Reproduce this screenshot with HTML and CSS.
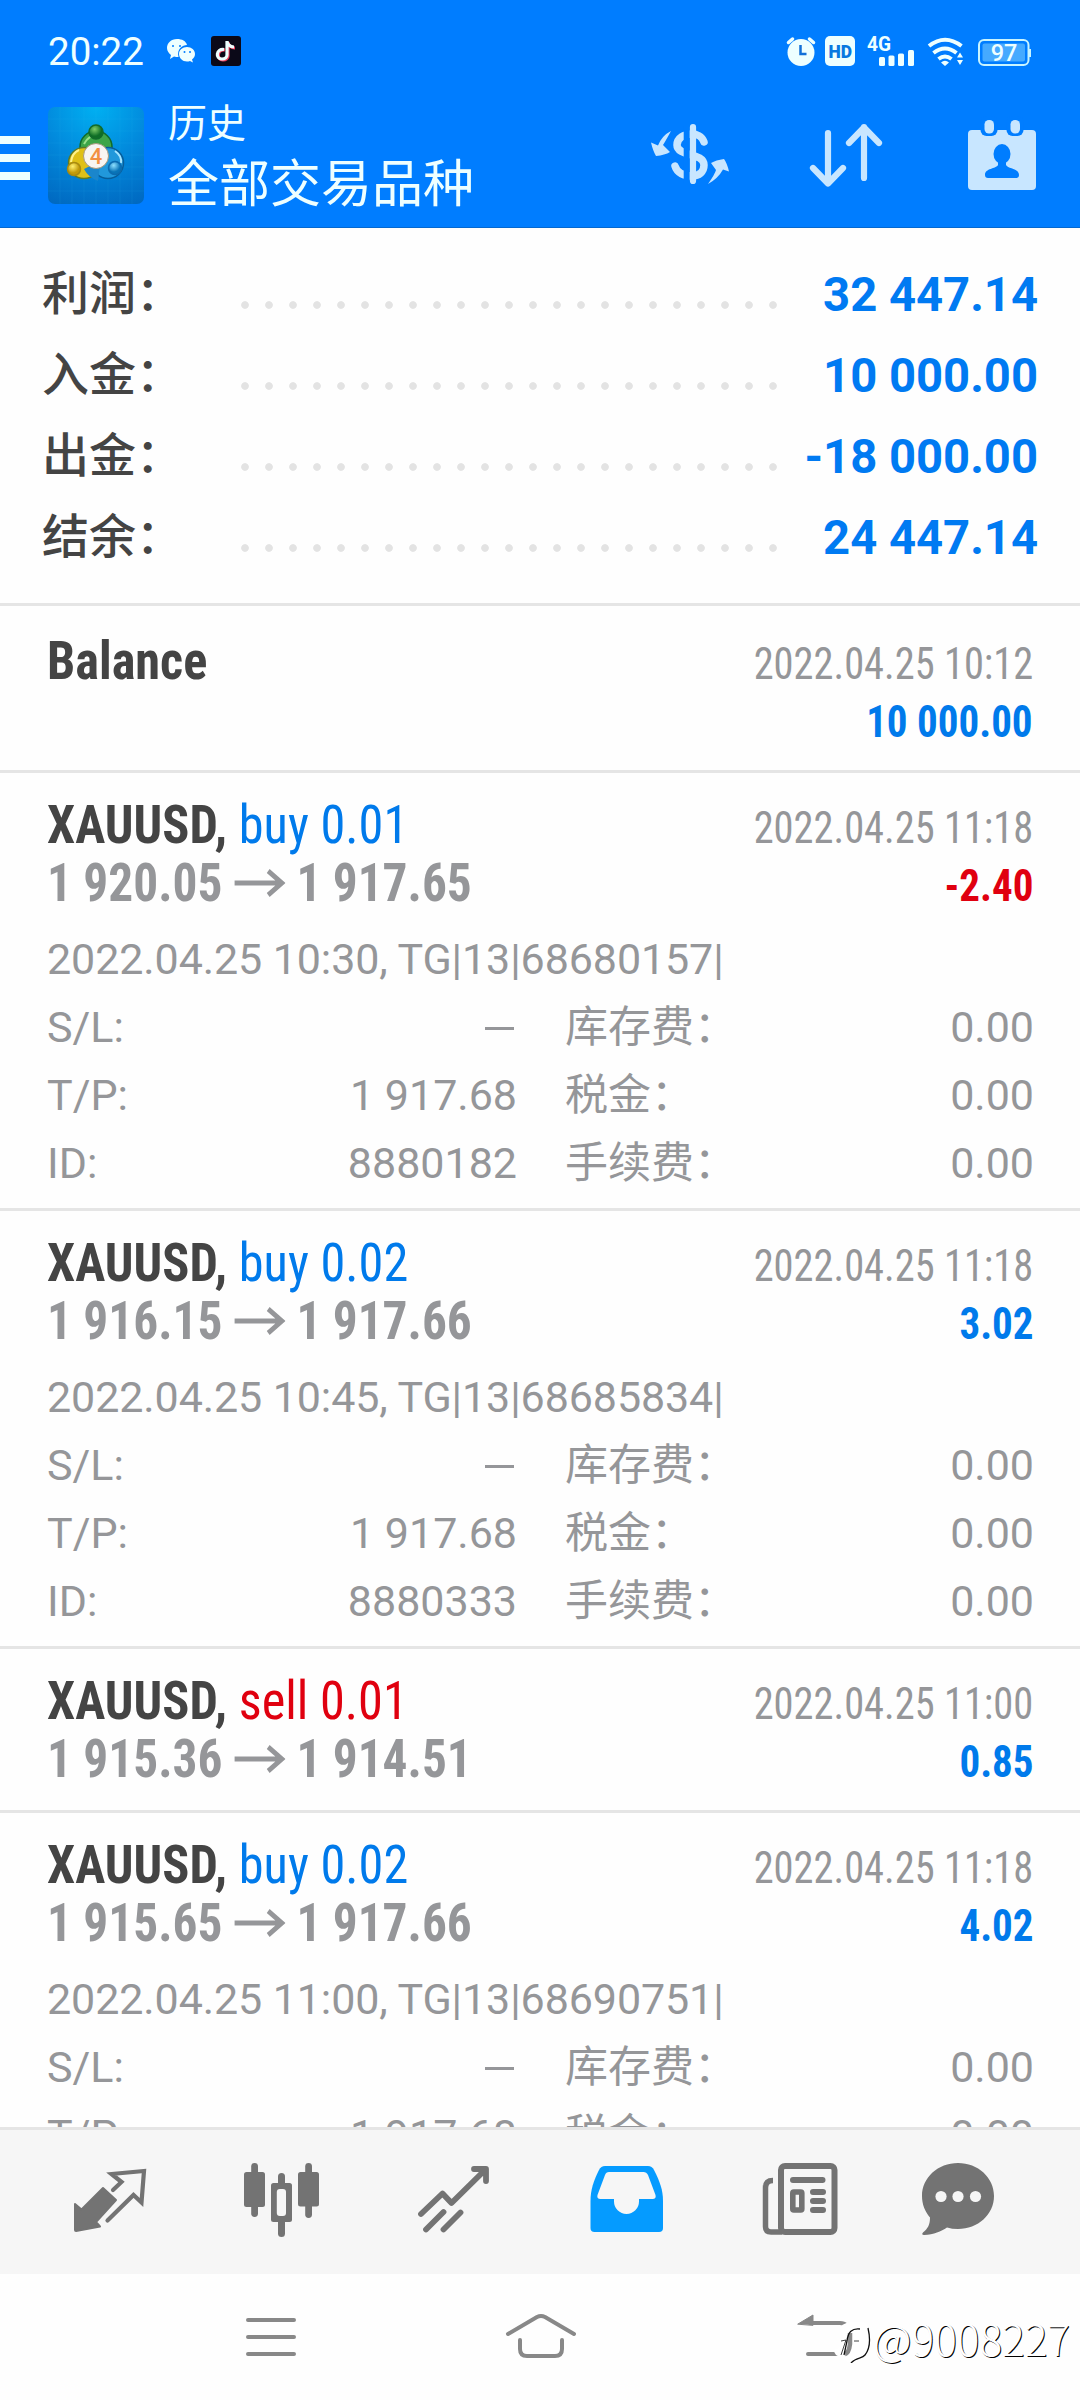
FILE: index.html
```html
<!DOCTYPE html>
<html lang="zh-CN">
<head>
<meta charset="utf-8">
<title>历史</title>
<link rel="stylesheet" href="styles.css">
</head>
<body>
<div class="screen">
  <header class="header">
    <div class="status">
      <span class="clock">20:22</span>
      <svg class="wechat" width="28" height="24" viewBox="167 39 28 24"><path fill="#eff" d="M177 39c-6 0-10 4-10 9 0 3 2 5.500 4 7l-1 4 4-2.500c1.500.5 3 .5 4.500.5-2-8 4-12 8.500-12-1-4-5-6-10-6z"/><path fill="#eff" d="M187 47c-4.500 0-8 3-8 7s3.500 7.500 8 7.500c1 0 2 0 3-.5l3 1.500-1-3c2-1.500 3-3.500 3-5.500 0-4-3.500-7-8-7z"/><g fill="#007dff"><circle cx="173" cy="46" r="1"/><circle cx="180" cy="46" r="1"/><circle cx="184.500" cy="52" r="1"/><circle cx="190" cy="52" r="1"/></g></svg>
      <svg class="tiktok" width="30" height="30" viewBox="0 0 30 30"><rect width="30" height="30" rx="3" fill="#0b0918"/><g fill="none" stroke-width="3.200"><path stroke="#f04060" d="M14 14c-8-1-9 10-2 10 3 0 5-2 5-4V6c0 3 3 6 7 6"/><path stroke="#eff" d="M13 13.500c-8-1-9 9.500-2 9.500 3 0 5-2 5-4V5c0 3 3 6 7 6"/></g></svg>
      <svg class="status-icons" width="244" height="32" viewBox="784 35 244 32">
        <g fill="none" stroke="#eff" stroke-width="3.500" stroke-linecap="round"><path d="M788.500 42.500l4-3.500M813.500 42.500l-4-3.500"/></g>
        <circle cx="801" cy="52.500" r="13.500" fill="#eff"/><path d="M800.500 45v9h6" fill="none" stroke="#1270d8" stroke-width="2.500"/>
        <rect x="825" y="36" width="30" height="30" rx="5" fill="#eff"/>
        <text x="828.500" y="58" font-size="19" font-weight="900" fill="#0878e0" textLength="23.500" lengthAdjust="spacingAndGlyphs">HD</text>
        <text x="867" y="51" font-size="20" font-weight="700" fill="#eff" textLength="24" lengthAdjust="spacingAndGlyphs">4G</text>
        <g fill="#eff"><rect x="879" y="57" width="6" height="9" rx="1.500"/><rect x="888.500" y="55.500" width="6" height="10.500" rx="1.500"/><rect x="898" y="53.500" width="6" height="12.500" rx="1.500"/><rect x="908" y="50" width="6" height="16" rx="1.500"/></g>
        <g fill="none" stroke="#eff" stroke-width="4"><path d="M929 46q16-12.500 32.500 0M933.500 53q11.500-9 23 0M938.500 59q6.500-5 13 0"/></g><path fill="#eff" d="M941 62.500q4-3.500 8 0l-4 3.500zM957 57.500l3-5 3 5zM957 60l3 5 3-5z"/>
        <rect x="979" y="40" width="49.500" height="25" rx="5" fill="none" stroke="#c8f4ff" stroke-width="2"/><rect x="982.500" y="43.500" width="42.500" height="18" rx="2" fill="#45aaff"/>
        <text x="1004" y="60.500" text-anchor="middle" font-size="23.500" font-weight="500" fill="#eff">97</text>
      </svg>
      <i class="battery-tip"></i>
    </div>
    <div class="toolbar">
      <div class="menu"><i></i><i></i><i></i></div>
      <svg class="logo" width="96" height="97" viewBox="48 107 96 97">
        <defs>
          <radialGradient id="bg" cx=".5" cy="0" r="1.100"><stop offset="0" stop-color="#00b0f2"/><stop offset=".5" stop-color="#0289dc"/><stop offset="1" stop-color="#0068c0"/></radialGradient>
          <radialGradient id="gr" cx=".4" cy=".3"><stop offset="0" stop-color="#7fcc68"/><stop offset="1" stop-color="#0f6e26"/></radialGradient>
          <radialGradient id="ye" cx=".4" cy=".3"><stop offset="0" stop-color="#fff070"/><stop offset="1" stop-color="#c29a08"/></radialGradient>
          <radialGradient id="bl" cx=".4" cy=".3"><stop offset="0" stop-color="#8fe0ff"/><stop offset="1" stop-color="#0874b8"/></radialGradient>
        </defs>
        <rect x="48" y="107" width="96" height="97" rx="7" fill="url(#bg)"/>
        <path d="M60 107v97M72 107v97M84 107v97M96 107v97M108 107v97M120 107v97M132 107v97M48 119h96M48 131h96M48 143h96M48 155h96M48 167h96M48 179h96M48 191h96" stroke="#3bc0f4" stroke-width=".7" opacity=".14"/>
        <g stroke-width="1.500">
          <circle cx="96" cy="147" r="16" fill="#3da548" stroke="#126b2b"/>
          <path d="M84 144q5-10 15-9" fill="none" stroke="#9be08c" stroke-width="2"/>
          <circle cx="108" cy="163" r="15.500" fill="#2198db" stroke="#075d99"/>
          <path d="M115 151q7 5 6 12" fill="none" stroke="#a5e4ff" stroke-width="2"/>
          <circle cx="84" cy="163" r="15.500" fill="#dfc018" stroke="#5c7a26"/>
          <path d="M71 162q1-9 8-12" fill="none" stroke="#fff28a" stroke-width="2"/>
          <path d="M92 165l8 0-2 16q-10-4-14-12z" fill="#1a86cc" stroke="none"/>
          <circle cx="96" cy="132" r="7" fill="url(#gr)" stroke="#126b2b"/>
          <circle cx="74" cy="169" r="6.500" fill="url(#ye)" stroke="#a88a10"/>
          <circle cx="115" cy="168" r="6.500" fill="url(#bl)" stroke="#0b6bb0"/>
        </g>
        <circle cx="96" cy="156" r="12.500" fill="#f8f5f2" stroke="#a8987c" stroke-width="1"/>
        <text x="96" y="164" text-anchor="middle" font-size="22" font-weight="500" fill="#f29043">4</text>
      </svg>
      <div class="titles"><div class="t1">历史</div><div class="t2">全部交易品种</div></div>
      <svg class="actions" width="390" height="76" viewBox="648 116 390 76">
        <g fill="#c8e6ff">
          <path d="M671 131q-6 11-8 14l7 7q-5 3-14 4-3-5-5-13.500l7 3q4-10 13-14.500z"/>
          <path d="M708 184q7-10 8-14l-5-7q5-3 13-4 3 4 5 12.500l-6-2q-5 9-15 14.500z"/>
        </g>
        <path d="M704 142c-2-6-8-8-12-8-8 0-15 4-15 11 0 12 27 7 27 20 0 7-5 11-12 11-8 0-15-3-17-10" fill="none" stroke="#c8e6ff" stroke-width="7.500" stroke-linecap="round"/>
        <path fill="#007dff" d="M683.700 126h6v58h-6z"/>
        <g fill="none" stroke="#c8e6ff" stroke-width="6.200" stroke-linecap="round" stroke-linejoin="round">
          <path d="M693 127v54M828 133v50M813 168l15 15.500 15-15.500M864 178v-51M849 143l15-15.500 15 15.500"/>
        </g>
        <rect x="968" y="130" width="68" height="60" rx="4" fill="#c8e6ff"/>
        <g fill="#007dff"><rect x="980.500" y="116" width="17" height="20" rx="6"/><rect x="1006.500" y="116" width="17" height="20" rx="6"/><ellipse cx="1002" cy="154" rx="8.500" ry="10"/><path d="M998 160h8v5c2 4 13 3 13 10 0 2-1 3-3 3h-28c-2 0-3-1-3-3 0-7 11-6 13-10z"/></g>
        <g fill="#c8e6ff"><rect x="984.500" y="120" width="9.500" height="13.500" rx="4.500"/><rect x="1010.500" y="120" width="9.500" height="13.500" rx="4.500"/></g>
      </svg>
    </div>
  </header>

  <section class="summary">
    <div class="srow"><span class="slabel">利润：</span><i class="dots"></i><b>32 447.14</b></div>
    <div class="srow"><span class="slabel">入金：</span><i class="dots"></i><b>10 000.00</b></div>
    <div class="srow"><span class="slabel">出金：</span><i class="dots"></i><b>-18 000.00</b></div>
    <div class="srow"><span class="slabel">结余：</span><i class="dots"></i><b>24 447.14</b></div>
  </section>

  <main class="list">
    <article class="item first">
      <div class="line"><span class="name">Balance</span><span class="date">2022.04.25 10:12</span></div>
      <div class="line"><span></span><span class="profit">10 000.00</span></div>
    </article>
    <article class="item">
      <div class="line"><span class="name">XAUUSD, <span class="buy">buy 0.01</span></span><span class="date">2022.04.25 11:18</span></div>
      <div class="line"><span class="price"><span>1 920.05</span><svg width="56" height="28" viewBox="0 0 56 28"><path d="M0 14h52M37 2l15 12-15 12"/></svg><span>1 917.65</span></span><span class="profit loss">-2.40</span></div>
      <div class="details">
        <div class="comment">2022.04.25 10:30, TG|13|68680157|</div>
        <div class="drow"><span>S/L:</span><span class="v dash"><i></i></span><span class="k2">库存费：</span><span class="v">0.00</span></div>
        <div class="drow"><span>T/P:</span><span class="v">1 917.68</span><span class="k2">税金：</span><span class="v">0.00</span></div>
        <div class="drow"><span>ID:</span><span class="v">8880182</span><span class="k2">手续费：</span><span class="v">0.00</span></div>
      </div>
    </article>
    <article class="item">
      <div class="line"><span class="name">XAUUSD, <span class="buy">buy 0.02</span></span><span class="date">2022.04.25 11:18</span></div>
      <div class="line"><span class="price"><span>1 916.15</span><svg width="56" height="28" viewBox="0 0 56 28"><path d="M0 14h52M37 2l15 12-15 12"/></svg><span>1 917.66</span></span><span class="profit">3.02</span></div>
      <div class="details">
        <div class="comment">2022.04.25 10:45, TG|13|68685834|</div>
        <div class="drow"><span>S/L:</span><span class="v dash"><i></i></span><span class="k2">库存费：</span><span class="v">0.00</span></div>
        <div class="drow"><span>T/P:</span><span class="v">1 917.68</span><span class="k2">税金：</span><span class="v">0.00</span></div>
        <div class="drow"><span>ID:</span><span class="v">8880333</span><span class="k2">手续费：</span><span class="v">0.00</span></div>
      </div>
    </article>
    <article class="item">
      <div class="line"><span class="name">XAUUSD, <span class="sell">sell 0.01</span></span><span class="date">2022.04.25 11:00</span></div>
      <div class="line"><span class="price"><span>1 915.36</span><svg width="56" height="28" viewBox="0 0 56 28"><path d="M0 14h52M37 2l15 12-15 12"/></svg><span>1 914.51</span></span><span class="profit">0.85</span></div>
    </article>
    <article class="item">
      <div class="line"><span class="name">XAUUSD, <span class="buy">buy 0.02</span></span><span class="date">2022.04.25 11:18</span></div>
      <div class="line"><span class="price"><span>1 915.65</span><svg width="56" height="28" viewBox="0 0 56 28"><path d="M0 14h52M37 2l15 12-15 12"/></svg><span>1 917.66</span></span><span class="profit">4.02</span></div>
      <div class="details">
        <div class="comment">2022.04.25 11:00, TG|13|68690751|</div>
        <div class="drow"><span>S/L:</span><span class="v dash"><i></i></span><span class="k2">库存费：</span><span class="v">0.00</span></div>
        <div class="drow"><span>T/P:</span><span class="v">1 917.68</span><span class="k2">税金：</span><span class="v">0.00</span></div>
      </div>
    </article>
  </main>

  <nav class="tabs">
    <svg viewBox="24 2130 172 144"><path fill="#737373" stroke="#737373" stroke-width="2" stroke-linejoin="round" d="M103 2188l13 12-20 22 4 4.500-24 4.500q-1 0-1-1v-26l6.500 5.500z"/><path fill="none" stroke="#737373" stroke-width="4.200" d="M113 2190l8.500-8-10-8 32.500-3-2.500 31.500-8-7.500-26 25.500" stroke-linecap="round"/></svg>
    <svg viewBox="196 2130 172 144"><g fill="#737373"><rect x="244" y="2172" width="21" height="35" rx="2.500"/><rect x="251.200" y="2163" width="6.800" height="54" rx="3.400"/><rect x="298" y="2172" width="21" height="34.500" rx="2.500"/><rect x="305.200" y="2163" width="6.800" height="55" rx="3.400"/><rect x="271" y="2183" width="21" height="39" rx="2.500"/><rect x="278" y="2173" width="7" height="64" rx="3.500"/></g><rect x="276.800" y="2189" width="9.200" height="27" rx="3" fill="#f6f6f6"/></svg>
    <svg viewBox="368 2130 172 144"><g fill="none" stroke="#737373" stroke-width="5.800" stroke-linecap="round" stroke-linejoin="round"><path d="M421 2214l21.500-20.500 9 9.500 34-33.500M474 2169h12v12M426 2229.500l17.500-17.500M443.500 2229.500l17-17"/></g></svg>
    <svg viewBox="540 2130 172 144"><path fill="#059bff" d="M605 2166h43q4 0 6 4c6 12 9 20 9 31v27q0 4-4 4h-64.500q-4 0-4-4v-27c0-11 3-20 8.500-31q2-4 6-4z"/><path fill="#f6f6f6" d="M609 2172h34.500q3 0 4.500 3l7.500 20q1 4-3 4H639v2.500a12.500 12.500 0 0 1-25 0V2199h-13.500q-4 0-3-4l7.500-20q1-3 4-3z"/></svg>
    <svg viewBox="712 2130 172 144"><g fill="none" stroke="#737373"><rect x="781" y="2166" width="53.500" height="66" rx="4" stroke-width="6"/><path d="M773 2180.500q-7.500 0-7.500 7v39q0 5.500 5.500 5.500h11" stroke-width="5.500"/><rect x="792.800" y="2192" width="9" height="18" rx="1" stroke-width="5.600"/><path d="M793 2180h29.500M813 2192h10M813 2201h10M813 2210h10" stroke-width="6" stroke-linecap="round"/></g></svg>
    <svg viewBox="884 2130 172 144"><path fill="#737373" d="M958 2163c20 0 36 14.500 36 33s-16 33-36 33q-6 0-11-1.500c-6 4-13 7-23 7.500q-3-.5-1-2.500c5-4 7-8 7-15-5-6-8-13-8-21.500 0-18.500 16-33 36-33z"/><g fill="#f6f6f6"><circle cx="941" cy="2196.500" r="5.600"/><circle cx="958" cy="2196.500" r="5.600"/><circle cx="975.500" cy="2196.500" r="5.600"/></g></svg>
  </nav>
  <footer class="sysnav">
    <svg viewBox="135 2274 270 126"><path d="M248 2320h46M248 2337h46M248 2354h46"/></svg>
    <svg viewBox="405 2274 270 126"><path d="M508 2334l29-17q4-2 8 0l29 17M520 2340v9q0 7 7 7h28q7 0 7-7v-9"/></svg>
    <svg viewBox="675 2274 270 126"><path d="M808 2354h32q8 0 8-8v-14q0-9-8-9h-30"/><path class="solid" d="M798 2324l15-9v10z"/></svg>
    <div class="mark">
      <svg width="38" height="44" viewBox="830 2319 38 44"><path fill="#fff" d="M837 2327q5-6 22-5 9 1 9 18-1 18-14 20l-7 3-14-8-3-5q8-1 10-14z"/><path fill="none" stroke="#888" stroke-width="4.500" d="M847 2333v11q-1 9-5 10"/><g fill="none" stroke="#111" stroke-width="1.300"><path d="M857 2329c-8-1-12 3-13 12l-3 14M865 2328c3 13 1 22-3 27-3 4-9 2-14 8"/><path stroke-width=".8" d="M838 2341l5-1-5 15M851 2341h5"/></g></svg>
      <span>@9008227</span>
    </div>
  </footer>
</div>
</body>
</html>
```
FILE: styles.css
```css
* { box-sizing: border-box; }
body { margin: 0; background: #fff; font-family: Roboto, "Noto Sans CJK SC", sans-serif; }
i { display: block; }
svg { display: block; flex: none; }
.screen { width: 1080px; height: 2400px; display: flex; flex-direction: column; overflow: hidden; background: #fefefe; }

.header { height: 228px; flex: none; background: #007dff; color: #eff; border-bottom: 1px solid #0468d0; }
.status { height: 100px; display: flex; align-items: flex-start; padding: 35px 49px 0 48px; }
.clock { width: 119px; font-size: 38.500px; line-height: 34px; }
.wechat { margin: 4px 16px 0 0; }
.tiktok { margin-top: 1px; }
.status-icons { margin-left: auto; overflow: visible; }
.battery-tip { width: 2px; height: 8px; margin: 14px 0 0 1px; background: #c8f4ff; }
.toolbar { display: flex; align-items: flex-start; height: 127px; }
.menu { width: 48px; flex: none; padding-top: 36px; }
.menu i { width: 30px; height: 8px; margin-bottom: 10px; background: #eff; }
.logo { margin-top: 7px; }
.titles { margin-left: 24px; white-space: nowrap; font-family: "Noto Sans CJK SC", sans-serif; font-weight: 400; }
.t1 { font-size: 39px; line-height: 40px; }
.t2 { font-size: 51px; line-height: 60px; margin-top: 10px; }
.actions { margin: 16px 42px 0 auto; }

.summary { height: 378px; flex: none; padding-top: 24px; border-bottom: 3px solid #e5e5e5; }
.srow { height: 81px; display: flex; align-items: flex-start; padding: 0 42px; }
.slabel { width: 191px; font: 500 47px/76px "Noto Sans CJK SC", sans-serif; color: #444; white-space: nowrap; }
.dots { width: 552px; height: 8px; margin-top: 49px; background: radial-gradient(circle at 12px 4px, #e3e3e3 3.400px, transparent 4.200px) 0 0 / 24px 8px repeat-x; }
.srow b { margin-left: auto; font-size: 47.200px; line-height: 86px; color: #007af2; white-space: pre; }

.list { height: 1521px; flex: none; overflow: hidden; }
.item { padding: 20px 47px 28px; border-bottom: 3px solid #e5e5e5; }
.item.first { padding-top: 23px; }
.line { display: flex; justify-content: space-between; align-items: baseline; height: 58px; line-height: 64px; white-space: pre; font-stretch: 75%; }
.line:nth-child(2) { height: 55px; }
.first .line:nth-child(2) { padding-top: 3px; }
/* The list face is a little narrower than Roboto Condensed */
.name { transform: scaleX(.932); transform-origin: left; }
.price { transform: scaleX(.914); transform-origin: left; }
.date { transform: scaleX(.919); transform-origin: right; }
.profit { transform: scaleX(.932); transform-origin: right; }
.name { font-size: 54px; font-weight: 700; color: #444; }
.buy, .sell { font-weight: 400; color: #007aeb; }
.sell { color: #e0000f; }
.date { font-size: 44px; color: #959699; }
.profit { font-size: 44px; font-weight: 700; color: #007aeb; }
.profit.loss { color: #e0000f; }
.price { display: flex; align-items: baseline; font-size: 54px; font-weight: 700; color: #959699; }
.price svg { margin: 0 12px 0 13px; align-self: center; fill: none; stroke: #959699; stroke-width: 5; }
.details { color: #959699; font-size: 43px; white-space: nowrap; margin-bottom: -18px; }
.comment { height: 88px; line-height: 50px; padding-top: 28px; letter-spacing: -.09px; }
.drow { display: grid; grid-template-columns: 170px 300px 48px 1fr auto; height: 68px; line-height: 67px; margin-right: -1px; }
.drow .v { text-align: right; }
.drow .k2 { grid-column: 4; }
.dash { display: flex; justify-content: flex-end; align-items: center; }
.dash i { width: 29px; height: 3px; background: #959699; margin-right: 3px; }

.tabs { height: 147px; flex: none; display: flex; padding-left: 24px; background: #f6f6f6; border-top: 3px solid #e5e5e5; }
.tabs svg { width: 172px; height: 144px; }
.sysnav { height: 126px; flex: none; display: flex; padding-left: 135px; position: relative; }
.sysnav > svg { width: 270px; height: 126px; fill: none; stroke: #888; stroke-width: 4; stroke-linecap: round; stroke-linejoin: round; }
.sysnav .solid { fill: #888; stroke-width: 1; }
.mark { position: absolute; right: 10px; top: 45px; display: flex; }
.mark span { margin: -3px 0 0 2px; font: 300 42.300px/44px "Noto Sans CJK SC", sans-serif; color: #fff; text-shadow: 1px 1px 0 #000; }
```
